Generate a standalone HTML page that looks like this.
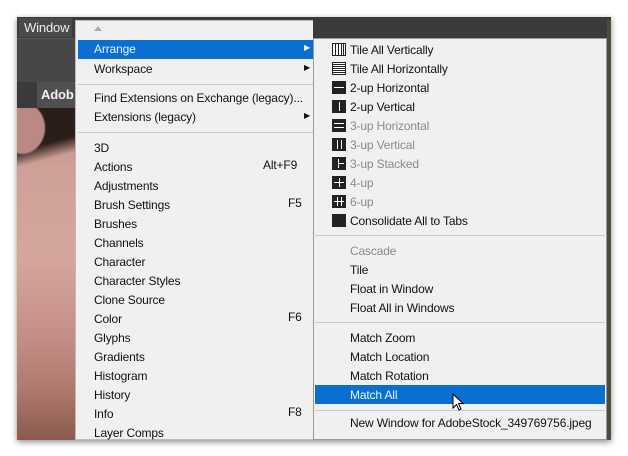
<!DOCTYPE html><html><head><style>
*{margin:0;padding:0;box-sizing:border-box}
body{width:628px;height:456px;background:#fff;position:relative;overflow:hidden;font-family:"Liberation Sans",sans-serif;font-size:12px;color:#111;letter-spacing:-0.15px}
.a{position:absolute}
.frame{left:17px;top:17px;width:594px;height:423px;box-shadow:0 2px 6px rgba(0,0,0,.45);background:#535353;overflow:hidden}
.t{position:absolute;white-space:nowrap}
.hl{background:#0a6fd0;color:#e8f2ff}
.sep{position:absolute;height:1px;background:#c8c8c8}
.g{color:#8a8a8a}
svg.ic{position:absolute;left:332px}
</style></head><body>
<div class="a frame">
 <div class="a" style="left:0;top:0;width:594px;height:21px;background:#3b3b3b"></div>
 <div class="a" style="left:2px;top:1px;width:53px;height:19px;background:#4a4a4a;color:#eee;font-size:13px;padding:2px 0 0 5px">Window</div>
 <div class="a" style="left:0;top:21px;width:60px;height:44px;background:#474747;border-top:1px solid #555"></div>
 <div class="a" style="left:0;top:65px;width:60px;height:26px;background:#3a3a3a"></div>
 <div class="a" style="left:20px;top:65px;width:40px;height:26px;background:#505050;color:#f2f2f2;font-weight:bold;font-size:13px;padding:5px 0 0 4px">Adob</div>
 <div class="a" style="left:0;top:91px;width:60px;height:332px;background:linear-gradient(180deg,#c08f88 0px,#cfa097 60px,#d5a69c 150px,#c48e86 230px,#b07a70 280px,#8c5b50 330px)"></div>
 <div class="a" style="left:0;top:91px;width:60px;height:80px;background:radial-gradient(ellipse 40px 45px at 5px 20px,#b98a84 55%,transparent 60%),linear-gradient(165deg,#2b1d1a 45%,transparent 62%)"></div>
</div>
<div class="a" style="left:75px;top:20px;width:241px;height:420px;background:#f0f0f0;border:1px solid #bbb">
 <div class="t" style="left:18px;top:5px;width:0;height:0;border-left:4px solid transparent;border-right:4px solid transparent;border-bottom:5px solid #aaa"></div>
 <div class="a hl" style="left:2px;top:19px;width:235px;height:19px"></div>
 <div class="t" style="left:18px;top:21px;color:#e8f2ff">Arrange</div><div class="t" style="left:228px;top:22px;color:#fff;font-size:8px">▶</div>
 <div class="t" style="left:18px;top:41px">Workspace</div><div class="t" style="left:228px;top:42px;font-size:8px">▶</div>
 <div class="sep" style="left:2px;top:63px;width:235px"></div>
 <div class="t" style="left:18px;top:70px">Find Extensions on Exchange (legacy)...</div>
 <div class="t" style="left:18px;top:89px">Extensions (legacy)</div><div class="t" style="left:228px;top:90px;font-size:8px">▶</div>
 <div class="sep" style="left:2px;top:111px;width:235px"></div>
 <div class="t" style="left:18px;top:118px;line-height:19px">3D<br>Actions<br>Adjustments<br>Brush Settings<br>Brushes<br>Channels<br>Character<br>Character Styles<br>Clone Source<br>Color<br>Glyphs<br>Gradients<br>Histogram<br>History<br>Info<br>Layer Comps</div>
 <div class="t" style="left:187px;top:137px">Alt+F9</div>
 <div class="t" style="left:212px;top:175px">F5</div>
 <div class="t" style="left:212px;top:289px">F6</div>
 <div class="t" style="left:212px;top:384px">F8</div>
</div>
<div class="a" style="left:313px;top:38px;width:294px;height:402px;background:#f0f0f0;border:1px solid #999"></div>
<div class="a" style="left:607px;top:20px;width:4px;height:420px;background:#4a4d3a"></div>
<div class="a" style="left:313px;top:20px;width:294px;height:18px;background:#3b3b3b"></div>
<svg class="ic" style="top:43px" width="14" height="13" viewBox="0 0 14 13"><rect x="0.5" y="0.5" width="13" height="12" fill="#fff" stroke="#222"/><path d="M3.5 1v11M6.5 1v11M9.5 1v11M11.5 1v11" stroke="#222"/></svg>
<svg class="ic" style="top:62px" width="14" height="13" viewBox="0 0 14 13"><rect x="0.5" y="0.5" width="13" height="12" fill="#fff" stroke="#222"/><path d="M1 2.5h12M1 4.5h12M1 6.5h12M1 8.5h12M1 10.5h12" stroke="#222"/></svg>
<svg class="ic" style="top:81px" width="14" height="13" viewBox="0 0 14 13"><rect x="0.5" y="0.5" width="13" height="12" fill="#222" stroke="#222"/><path d="M2 6.5h10" stroke="#fff"/></svg>
<svg class="ic" style="top:100px" width="14" height="13" viewBox="0 0 14 13"><rect x="0.5" y="0.5" width="13" height="12" fill="#222" stroke="#222"/><path d="M7.5 2v9" stroke="#fff"/></svg>
<svg class="ic" style="top:119px" width="14" height="13" viewBox="0 0 14 13"><rect x="0.5" y="0.5" width="13" height="12" fill="#222" stroke="#222"/><path d="M2 4.5h10M2 8.5h10" stroke="#fff"/></svg>
<svg class="ic" style="top:138px" width="14" height="13" viewBox="0 0 14 13"><rect x="0.5" y="0.5" width="13" height="12" fill="#222" stroke="#222"/><path d="M5.5 2v9M9.5 2v9" stroke="#fff"/></svg>
<svg class="ic" style="top:157px" width="14" height="13" viewBox="0 0 14 13"><rect x="0.5" y="0.5" width="13" height="12" fill="#222" stroke="#222"/><path d="M6.5 2v9M7 6.5h5" stroke="#fff"/></svg>
<svg class="ic" style="top:176px" width="14" height="13" viewBox="0 0 14 13"><rect x="0.5" y="0.5" width="13" height="12" fill="#222" stroke="#222"/><path d="M7.5 2v9M2 6.5h10" stroke="#fff"/></svg>
<svg class="ic" style="top:195px" width="14" height="13" viewBox="0 0 14 13"><rect x="0.5" y="0.5" width="13" height="12" fill="#222" stroke="#222"/><path d="M5.5 2v9M9.5 2v9M2 6.5h10" stroke="#fff"/></svg>
<svg class="ic" style="top:214px" width="14" height="13" viewBox="0 0 14 13"><rect x="0.5" y="0.5" width="13" height="12" fill="#222" stroke="#222"/></svg>
<div class="t" style="left:350px;top:41px;line-height:19px">Tile All Vertically<br>Tile All Horizontally<br>2-up Horizontal<br>2-up Vertical<br><span class="g">3-up Horizontal<br>3-up Vertical<br>3-up Stacked<br>4-up<br>6-up</span><br>Consolidate All to Tabs</div>
<div class="sep" style="left:315px;top:235px;width:290px"></div>
<div class="t" style="left:350px;top:242px;line-height:19px"><span class="g">Cascade</span><br>Tile<br>Float in Window<br>Float All in Windows</div>
<div class="sep" style="left:315px;top:322px;width:290px"></div>
<div class="a hl" style="left:315px;top:385px;width:290px;height:19px"></div>
<div class="t" style="left:350px;top:329px;line-height:19px">Match Zoom<br>Match Location<br>Match Rotation<br><span style="color:#e8f2ff">Match All</span></div>
<div class="sep" style="left:315px;top:410px;width:290px"></div>
<div class="t" style="left:350px;top:416px">New Window for AdobeStock_349769756.jpeg</div>
<svg class="a" style="left:452px;top:393px" width="14" height="20" viewBox="0 0 14 20"><path d="M1 1 L1 15 L4.5 11.5 L7 17 L9 16 L6.5 10.5 L11 10.5 Z" fill="#fff" stroke="#000" stroke-width="1"/></svg>
</body></html>
